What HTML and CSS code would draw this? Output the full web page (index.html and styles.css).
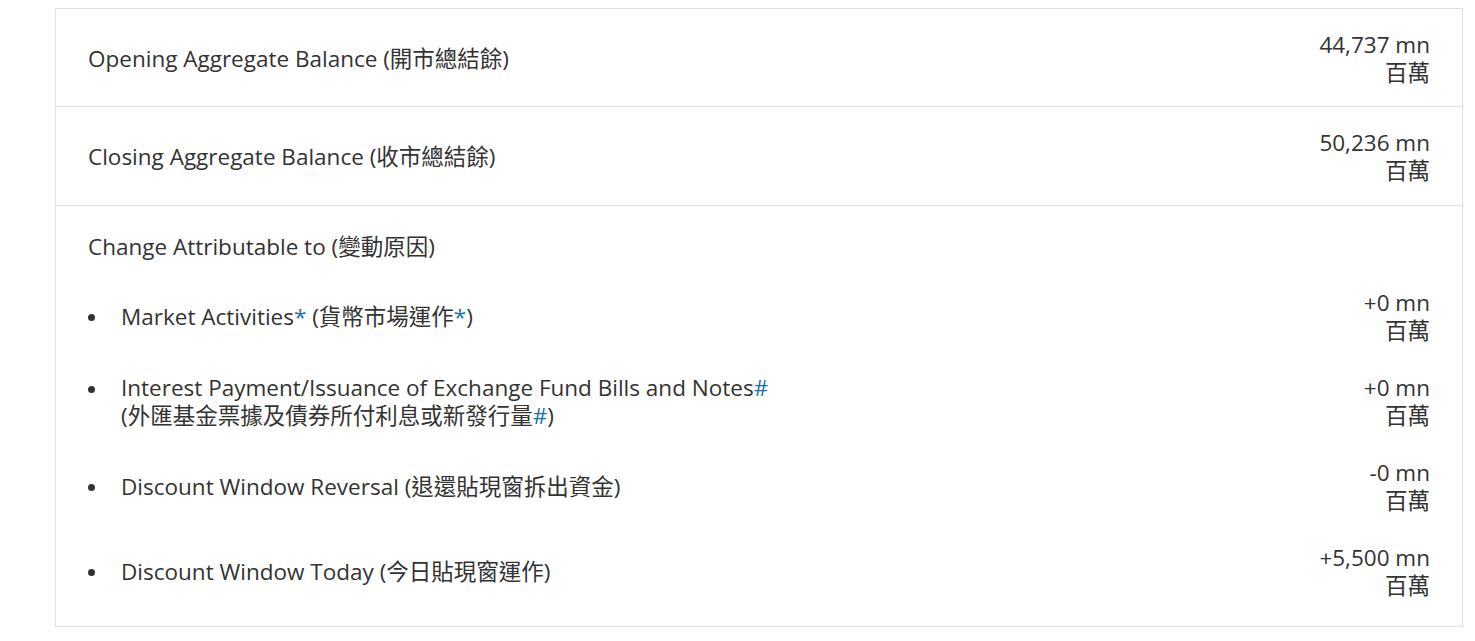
FILE: index.html
```html
<!DOCTYPE html>
<html>
<head>
    <link rel="stylesheet" href="styles.css">
</head>
<body>
    <div class="balance-box">
        <div class="row">
            <div class="label">Opening Aggregate Balance (開市總結餘)</div>
            <div class="amount">44,737 mn<br>百萬</div>
        </div>
        <div class="row">
            <div class="label">Closing Aggregate Balance (收市總結餘)</div>
            <div class="amount">50,236 mn<br>百萬</div>
        </div>
        <div class="row change">
            <div class="label">Change Attributable to (變動原因)</div>
            <ul class="items">
                <li>
                    <div class="label">Market Activities<a href="#">*</a> (貨幣市場運作<a href="#">*</a>)</div>
                    <div class="amount">+0 mn<br>百萬</div>
                </li>
                <li>
                    <div class="label">Interest Payment/Issuance of Exchange Fund Bills and Notes<a href="#">#</a><br>(外匯基金票據及債券所付利息或新發行量<a href="#">#</a>)</div>
                    <div class="amount">+0 mn<br>百萬</div>
                </li>
                <li>
                    <div class="label">Discount Window Reversal (退還貼現窗拆出資金)</div>
                    <div class="amount">-0 mn<br>百萬</div>
                </li>
                <li>
                    <div class="label">Discount Window Today (今日貼現窗運作)</div>
                    <div class="amount">+5,500 mn<br>百萬</div>
                </li>
            </ul>
        </div>
    </div>
</body>
</html>
```

FILE: styles.css
```css
body {
    margin: 8px 12px 0 55px;
    background-color: white;
    color: #333333;
    font-family: "Open Sans", "Noto Sans CJK TC", sans-serif;
    font-size: 22.5px;
    line-height: 28px;
}

.balance-box {
    border: 1px solid #e0e0e0;
}

.row {
    display: flex;
    justify-content: space-between;
    align-items: center;
    padding: 22px 32px 20px 32px;
    border-bottom: 1px solid #e0e0e0;
}

.row:first-child {
    padding-bottom: 19px;
}

.row:last-child {
    border-bottom: none;
}

.amount {
    text-align: right;
}

.change {
    display: block;
    padding-top: 27px;
    padding-bottom: 26px;
}

.items {
    list-style: none;
    margin: 28px 0 0 0;
    padding: 0;
}

.items li {
    position: relative;
    display: flex;
    justify-content: space-between;
    align-items: center;
    padding-left: 33px;
    margin-bottom: 29px;
}

.items li:last-child {
    margin-bottom: 0;
}

.items li::before {
    content: "";
    position: absolute;
    left: 0;
    top: 50%;
    width: 7px;
    height: 7px;
    margin-top: -3px;
    border-radius: 50%;
    background-color: #333333;
}

.items li:nth-child(2)::before {
    top: 14px;
    margin-top: -2px;
}

.items a {
    color: #1a6fb5;
    text-decoration: none;
}
```
